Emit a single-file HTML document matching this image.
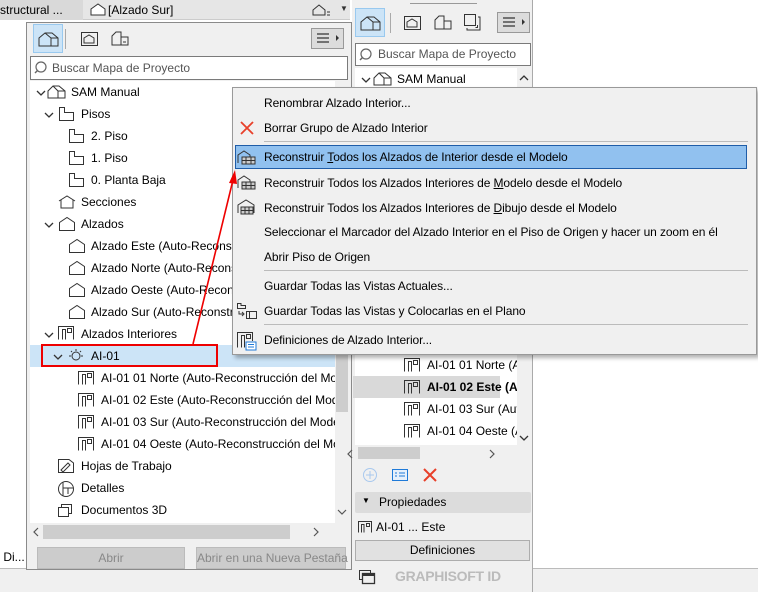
<!DOCTYPE html>
<html><head><meta charset="utf-8"><style>
*{margin:0;padding:0;box-sizing:border-box}
body{width:758px;height:592px;overflow:hidden;background:#fff;font-family:"Liberation Sans",sans-serif;font-size:12px;color:#000;position:relative}
.a{position:absolute;white-space:nowrap}
.t{position:absolute;white-space:nowrap;font-size:12px;line-height:22px;height:22px;overflow:hidden}
svg{position:absolute}
.m{position:absolute;left:264px;white-space:nowrap;font-size:12px;letter-spacing:-0.1px}
.c{position:absolute}
</style></head><body>
<!-- top tab bar -->
<div class="a" style="left:0;top:0;width:758px;height:20px;background:#fff"></div>
<div class="a" style="left:0;top:0;width:350px;height:20px;background:#e6e6e6;border-bottom:1px solid #ccc"></div>
<div class="a" style="left:0;top:0;width:83px;height:20px;background:#d9d9d9;line-height:20px;font-size:12px">structural ...</div>
<div class="a" style="left:108px;top:0;line-height:20px">[Alzado Sur]</div>
<svg style="left:89px;top:2px" width="18" height="15"><path d="M2 7 L9 2 L16 7 V13 H2Z" fill="#fff" stroke="#333"/></svg>
<svg style="left:311px;top:2px" width="22" height="16"><path d="M2 8 L8 3 L14 8 V13 H2Z" fill="none" stroke="#333"/><path d="M16 10h3M16 13h3" stroke="#333"/></svg>
<div class="a" style="left:340px;top:4px;font-size:8px;color:#333">▼</div>
<!-- left area -->
<div class="a" style="left:0;top:20px;width:27px;height:548px;background:#fff"></div>
<div class="a" style="left:0;top:546px;width:27px;height:22px;line-height:22px;font-size:12px">&nbsp;Di...</div>
<div class="a" style="left:0;top:568px;width:758px;height:24px;background:#f0f0f0;border-top:1px solid #bbb"></div>

<!-- left panel -->
<div class="a" style="left:26px;top:22px;width:326px;height:548px;background:#f0f0f0;border:1px solid #8a8a8a"></div>
<div class="a" style="left:33px;top:24px;width:30px;height:29px;background:#cce4f7;border:1px solid #99c9ef"></div>
<svg style="left:37px;top:30px" width="24" height="18"><path d="M2 16V8L8 3H15L21 8V16ZM8 3L14 8V16M14 8H21" fill="none" stroke="#333"/></svg>
<div class="a" style="left:65px;top:29px;width:1px;height:20px;background:#aaa"></div>
<svg style="left:80px;top:30px" width="20" height="18"><rect x="1.5" y="2.5" width="16" height="13" fill="none" stroke="#333"/><path d="M4 13V8L9 5L14 8V13Z" fill="none" stroke="#333"/></svg>
<svg style="left:110px;top:30px" width="20" height="18"><path d="M2 15V6L6 2H11V15ZM11 7H18V15H11" fill="none" stroke="#333"/><path d="M13 12h3" stroke="#333"/></svg>
<div class="a" style="left:311px;top:28px;width:33px;height:21px;background:#dcdcdc;border:1px solid #999"></div>
<svg style="left:316px;top:32px" width="26" height="14"><path d="M1 2H13M1 6H13M1 10H13" stroke="#333" stroke-width="1.2"/><path d="M20 3L23 6L20 9Z" fill="#333"/></svg>
<div class="a" style="left:30px;top:56px;width:318px;height:24px;background:#fff;border:1px solid #7a7a7a"></div>
<svg style="left:34px;top:60px" width="16" height="16"><circle cx="7" cy="7" r="5" fill="none" stroke="#666" stroke-width="1.2"/><path d="M3.5 10.5L1 13" stroke="#666" stroke-width="1.4"/></svg>
<div class="a" style="left:52px;top:58px;line-height:20px;color:#555">Buscar Mapa de Proyecto</div>
<div class="a" style="left:30px;top:81px;width:305px;height:442px;background:#fff"></div>
<div class="a" style="left:335px;top:81px;width:14px;height:442px;background:#f0f0f0"></div>
<div class="a" style="left:336px;top:345px;width:12px;height:67px;background:#cdcdcd"></div>
<svg style="left:337px;top:508px" width="10" height="8"><path d="M1 2L5 6L9 2" fill="none" stroke="#555" stroke-width="1.2"/></svg>
<div class="a" style="left:30px;top:523px;width:305px;height:18px;background:#f0f0f0"></div>
<div class="a" style="left:43px;top:525px;width:247px;height:14px;background:#cdcdcd"></div>
<svg style="left:32px;top:527px" width="8" height="10"><path d="M6 1L2 5L6 9" fill="none" stroke="#555" stroke-width="1.2"/></svg>
<svg style="left:312px;top:527px" width="8" height="10"><path d="M2 1L6 5L2 9" fill="none" stroke="#555" stroke-width="1.2"/></svg>
<div class="a" style="left:37px;top:547px;width:148px;height:22px;background:#cccccc;border:1px solid #bbb;text-align:center;line-height:20px;color:#888">Abrir</div>
<div class="a" style="left:196px;top:547px;width:150px;height:22px;background:#cccccc;border:1px solid #bbb;text-align:center;line-height:20px;color:#888">Abrir en una Nueva Pestaña</div>

<!-- selected row -->
<div class="a" style="left:30px;top:345px;width:305px;height:22px;background:#cce4f7"></div>
<div class="a" style="left:41px;top:344px;width:177px;height:23px;border:2px solid #e00"></div>

<!-- tree -->
<svg class="c" style="left:36px;top:89px" width="10" height="8"><path d="M1 2L5 6L9 2" fill="none" stroke="#333" stroke-width="1.3"/></svg>
<svg style="left:47px;top:84px" width="20" height="16"><path d="M1 14V7L6 2H12L18 7V14ZM6 2L11 7V14M11 7H18" fill="none" stroke="#333"/></svg>
<div class="t" style="left:71px;top:81px">SAM Manual</div>
<svg class="c" style="left:44px;top:111px" width="10" height="8"><path d="M1 2L5 6L9 2" fill="none" stroke="#333" stroke-width="1.3"/></svg>
<svg style="left:58px;top:106px" width="18" height="16"><path d="M1.5 14.5V1.5H6.5V6.5H15.5V14.5Z" fill="none" stroke="#333"/></svg>
<div class="t" style="left:81px;top:103px">Pisos</div>
<svg style="left:68px;top:128px" width="18" height="16"><path d="M1.5 14.5V1.5H6.5V6.5H15.5V14.5Z" fill="none" stroke="#333"/></svg>
<div class="t" style="left:91px;top:125px">2. Piso</div>
<svg style="left:68px;top:150px" width="18" height="16"><path d="M1.5 14.5V1.5H6.5V6.5H15.5V14.5Z" fill="none" stroke="#333"/></svg>
<div class="t" style="left:91px;top:147px">1. Piso</div>
<svg style="left:68px;top:172px" width="18" height="16"><path d="M1.5 14.5V1.5H6.5V6.5H15.5V14.5Z" fill="none" stroke="#333"/></svg>
<div class="t" style="left:91px;top:169px">0. Planta Baja</div>
<svg style="left:58px;top:194px" width="18" height="16"><path d="M1 7L9 2L17 7M3 6V14H15V6" fill="none" stroke="#333"/></svg>
<div class="t" style="left:81px;top:191px">Secciones</div>
<svg class="c" style="left:44px;top:221px" width="10" height="8"><path d="M1 2L5 6L9 2" fill="none" stroke="#333" stroke-width="1.3"/></svg>
<svg style="left:58px;top:216px" width="18" height="16"><path d="M1.5 14.5V6.5L9 1.5L16.5 6.5V14.5Z" fill="none" stroke="#333"/></svg>
<div class="t" style="left:81px;top:213px">Alzados</div>
<svg style="left:68px;top:238px" width="18" height="16"><path d="M1.5 14.5V6.5L9 1.5L16.5 6.5V14.5Z" fill="none" stroke="#333"/></svg>
<div class="t" style="left:91px;top:235px;width:150px">Alzado Este (Auto-Reconstr</div>
<svg style="left:68px;top:260px" width="18" height="16"><path d="M1.5 14.5V6.5L9 1.5L16.5 6.5V14.5Z" fill="none" stroke="#333"/></svg>
<div class="t" style="left:91px;top:257px;width:150px">Alzado Norte (Auto-Reconst</div>
<svg style="left:68px;top:282px" width="18" height="16"><path d="M1.5 14.5V6.5L9 1.5L16.5 6.5V14.5Z" fill="none" stroke="#333"/></svg>
<div class="t" style="left:91px;top:279px;width:150px">Alzado Oeste (Auto-Reconst</div>
<svg style="left:68px;top:304px" width="18" height="16"><path d="M1.5 14.5V6.5L9 1.5L16.5 6.5V14.5Z" fill="none" stroke="#333"/></svg>
<div class="t" style="left:91px;top:301px;width:150px">Alzado Sur (Auto-Reconstr</div>
<svg class="c" style="left:44px;top:331px" width="10" height="8"><path d="M1 2L5 6L9 2" fill="none" stroke="#333" stroke-width="1.3"/></svg>
<svg style="left:57px;top:325px" width="18" height="16"><path d="M1.5 14.5V1.5H16.5V14.5M5.5 14.5V4.5H8.5V14.5" fill="none" stroke="#333"/><rect x="10.5" y="3.5" width="4" height="4" fill="none" stroke="#333"/></svg>
<div class="t" style="left:81px;top:323px">Alzados Interiores</div>
<svg class="c" style="left:53px;top:353px" width="10" height="8"><path d="M1 2L5 6L9 2" fill="none" stroke="#333" stroke-width="1.3"/></svg>
<svg style="left:68px;top:348px" width="16" height="16"><circle cx="8" cy="8" r="4" fill="none" stroke="#333"/><path d="M8 1V3M3 3L4 4M13 3L12 4M1 8H3M13 8H15" stroke="#333"/></svg>
<div class="t" style="left:91px;top:345px">AI-01</div>
<svg style="left:77px;top:370px" width="18" height="16"><path d="M1.5 14.5V1.5H16.5V14.5M5.5 14.5V4.5H8.5V14.5" fill="none" stroke="#333"/><rect x="10.5" y="3.5" width="4" height="4" fill="none" stroke="#333"/></svg>
<div class="t" style="left:101px;top:367px;width:234px">AI-01 01 Norte (Auto-Reconstrucción del Modelo)</div>
<svg style="left:77px;top:392px" width="18" height="16"><path d="M1.5 14.5V1.5H16.5V14.5M5.5 14.5V4.5H8.5V14.5" fill="none" stroke="#333"/><rect x="10.5" y="3.5" width="4" height="4" fill="none" stroke="#333"/></svg>
<div class="t" style="left:101px;top:389px;width:234px">AI-01 02 Este (Auto-Reconstrucción del Modelo)</div>
<svg style="left:77px;top:414px" width="18" height="16"><path d="M1.5 14.5V1.5H16.5V14.5M5.5 14.5V4.5H8.5V14.5" fill="none" stroke="#333"/><rect x="10.5" y="3.5" width="4" height="4" fill="none" stroke="#333"/></svg>
<div class="t" style="left:101px;top:411px;width:234px">AI-01 03 Sur (Auto-Reconstrucción del Modelo)</div>
<svg style="left:77px;top:436px" width="18" height="16"><path d="M1.5 14.5V1.5H16.5V14.5M5.5 14.5V4.5H8.5V14.5" fill="none" stroke="#333"/><rect x="10.5" y="3.5" width="4" height="4" fill="none" stroke="#333"/></svg>
<div class="t" style="left:101px;top:433px;width:234px">AI-01 04 Oeste (Auto-Reconstrucción del Modelo)</div>
<svg style="left:57px;top:458px" width="18" height="16"><path d="M1.5 14.5V1.5H12L16.5 5V14.5Z" fill="none" stroke="#333"/><path d="M4 12L11 5L13 7L6 14Z" fill="none" stroke="#333"/></svg>
<div class="t" style="left:81px;top:455px">Hojas de Trabajo</div>
<svg style="left:57px;top:480px" width="18" height="18"><circle cx="9" cy="9" r="7.5" fill="none" stroke="#333"/><path d="M6 2V16M6 8H16M11 8V14" fill="none" stroke="#333"/></svg>
<div class="t" style="left:81px;top:477px">Detalles</div>
<svg style="left:57px;top:502px" width="18" height="16"><rect x="1.5" y="5.5" width="10" height="9" fill="none" stroke="#333"/><path d="M4.5 5.5V2.5H14.5V11.5H11.5" fill="none" stroke="#333"/></svg>
<div class="t" style="left:81px;top:499px">Documentos 3D</div>

<!-- right panel -->
<div class="a" style="left:352px;top:0;width:181px;height:592px;background:#f0f0f0;border-right:1px solid #aaa"></div>
<div class="a" style="left:410px;top:3px;width:67px;height:1px;background:#999"></div>
<div class="a" style="left:355px;top:8px;width:30px;height:29px;background:#cce4f7;border:1px solid #99c9ef"></div>
<svg style="left:359px;top:14px" width="24" height="18"><path d="M2 16V8L8 3H15L21 8V16ZM8 3L14 8V16M14 8H21" fill="none" stroke="#333"/></svg>
<div class="a" style="left:390px;top:13px;width:1px;height:20px;background:#aaa"></div>
<svg style="left:403px;top:14px" width="20" height="18"><rect x="1.5" y="2.5" width="16" height="13" fill="none" stroke="#333"/><path d="M4 13V8L9 5L14 8V13Z" fill="none" stroke="#333"/></svg>
<svg style="left:433px;top:14px" width="20" height="18"><path d="M2 15V6L6 2H11V15ZM11 7H18V15H11" fill="none" stroke="#333"/></svg>
<svg style="left:463px;top:13px" width="20" height="20"><rect x="1.5" y="1.5" width="11" height="11" fill="none" stroke="#333"/><path d="M4 15V17H17V4H15M12.5 14.5H14.5V12" fill="none" stroke="#333"/></svg>
<div class="a" style="left:497px;top:12px;width:33px;height:21px;background:#dcdcdc;border:1px solid #999"></div>
<svg style="left:502px;top:16px" width="26" height="14"><path d="M1 2H13M1 6H13M1 10H13" stroke="#333" stroke-width="1.2"/><path d="M20 3L23 6L20 9Z" fill="#333"/></svg>
<div class="a" style="left:355px;top:43px;width:176px;height:23px;background:#fff;border:1px solid #7a7a7a"></div>
<svg style="left:359px;top:47px" width="16" height="16"><circle cx="7" cy="7" r="5" fill="none" stroke="#666" stroke-width="1.2"/><path d="M3.5 10.5L1 13" stroke="#666" stroke-width="1.4"/></svg>
<div class="a" style="left:378px;top:44px;line-height:20px;color:#555">Buscar Mapa de Proyecto</div>
<div class="a" style="left:355px;top:68px;width:162px;height:377px;background:#fff"></div>
<svg class="c" style="left:361px;top:76px" width="10" height="8"><path d="M1 2L5 6L9 2" fill="none" stroke="#333" stroke-width="1.3"/></svg>
<svg style="left:373px;top:71px" width="20" height="16"><path d="M1 14V7L6 2H12L18 7V14ZM6 2L11 7V14M11 7H18" fill="none" stroke="#333"/></svg>
<div class="t" style="left:397px;top:68px">SAM Manual</div>
<svg style="left:519px;top:74px" width="10" height="8"><path d="M1 6L5 2L9 6" fill="none" stroke="#333" stroke-width="1.3"/></svg>
<svg style="left:519px;top:434px" width="10" height="8"><path d="M1 2L5 6L9 2" fill="none" stroke="#333" stroke-width="1.3"/></svg>
<div class="a" style="left:353px;top:376px;width:147px;height:22px;background:#d9d9d9"></div>
<svg style="left:403px;top:357px" width="18" height="16"><path d="M1.5 14.5V1.5H16.5V14.5M5.5 14.5V4.5H8.5V14.5" fill="none" stroke="#333"/><rect x="10.5" y="3.5" width="4" height="4" fill="none" stroke="#333"/></svg>
<div class="t" style="left:427px;top:354px;width:90px">AI-01 01 Norte (Au</div>
<svg style="left:403px;top:379px" width="18" height="16"><path d="M1.5 14.5V1.5H16.5V14.5M5.5 14.5V4.5H8.5V14.5" fill="none" stroke="#333"/><rect x="10.5" y="3.5" width="4" height="4" fill="none" stroke="#333"/></svg>
<div class="t" style="left:427px;top:376px;font-weight:bold;width:90px">AI-01 02 Este (Au</div>
<svg style="left:403px;top:401px" width="18" height="16"><path d="M1.5 14.5V1.5H16.5V14.5M5.5 14.5V4.5H8.5V14.5" fill="none" stroke="#333"/><rect x="10.5" y="3.5" width="4" height="4" fill="none" stroke="#333"/></svg>
<div class="t" style="left:427px;top:398px;width:90px">AI-01 03 Sur (Auto</div>
<svg style="left:403px;top:423px" width="18" height="16"><path d="M1.5 14.5V1.5H16.5V14.5M5.5 14.5V4.5H8.5V14.5" fill="none" stroke="#333"/><rect x="10.5" y="3.5" width="4" height="4" fill="none" stroke="#333"/></svg>
<div class="t" style="left:427px;top:420px;width:90px">AI-01 04 Oeste (Au</div>
<div class="a" style="left:358px;top:447px;width:62px;height:12px;background:#cdcdcd"></div>
<svg style="left:346px;top:449px" width="8" height="10"><path d="M6 1L2 5L6 9" fill="none" stroke="#555" stroke-width="1.2"/></svg>
<svg style="left:488px;top:449px" width="8" height="10"><path d="M2 1L6 5L2 9" fill="none" stroke="#555" stroke-width="1.2"/></svg>
<svg style="left:362px;top:467px" width="16" height="16"><circle cx="8" cy="8" r="6.5" fill="none" stroke="#a8c8ee"/><path d="M8 4V12M4 8H12" stroke="#a8c8ee"/></svg>
<svg style="left:391px;top:467px" width="18" height="16"><rect x="1.5" y="2.5" width="15" height="11" fill="#e6f0fb" stroke="#1f7ad8"/><path d="M4 6H6M8 6H14M4 9H6M8 9H14" stroke="#1f7ad8"/></svg>
<svg style="left:422px;top:467px" width="16" height="16"><path d="M2 2L14 14M14 2L2 14" stroke="#e8402a" stroke-width="2"/></svg>
<div class="a" style="left:355px;top:492px;width:176px;height:21px;background:#dcdcdc;border-radius:2px"></div>
<div class="a" style="left:362px;top:496px;font-size:8px">▼</div>
<div class="a" style="left:379px;top:492px;line-height:21px">Propiedades</div>
<svg style="left:357px;top:520px" width="16" height="14"><path d="M1.5 12.5V1.5H14.5V12.5M4.5 12.5V4.5H7V12.5" fill="none" stroke="#333"/><rect x="9.5" y="3.5" width="3" height="3" fill="none" stroke="#333"/></svg>
<div class="a" style="left:376px;top:518px;line-height:18px">AI-01 ... Este</div>
<div class="a" style="left:355px;top:540px;width:175px;height:21px;background:#e1e1e1;border:1px solid #adadad;text-align:center;line-height:19px">Definiciones</div>
<svg style="left:358px;top:569px" width="18" height="16"><rect x="1.5" y="1.5" width="11" height="9" fill="none" stroke="#333"/><rect x="4.5" y="4.5" width="12" height="10" fill="#f0f0f0" stroke="#333" stroke-width="1.3"/><path d="M4.5 6H16.5" stroke="#333" stroke-width="2"/></svg>
<div class="a" style="left:395px;top:567px;line-height:18px;font-size:14px;font-weight:bold;color:#bbb;letter-spacing:-0.3px">GRAPHISOFT ID</div>

<!-- context menu -->
<div class="a" style="left:232px;top:87px;width:525px;height:268px;background:#f0f0f0;border:1px solid #999;box-shadow:3px 3px 4px rgba(0,0,0,0.3)"></div>
<div class="m" style="top:96px">Renombrar Alzado Interior...</div>
<svg style="left:240px;top:121px" width="14" height="14"><path d="M1 1L13 13M13 1L1 13" stroke="#e8402a" stroke-width="1.8"/></svg>
<div class="m" style="top:121px">Borrar Grupo de Alzado Interior</div>
<div class="a" style="left:264px;top:141px;width:484px;height:1px;background:#bbb"></div>
<div class="a" style="left:235px;top:145px;width:512px;height:24px;background:#91c1ef;border:1px solid #1f5da8"></div>
<svg style="left:236px;top:149px" width="22" height="17"><path d="M2 14V6L8 2L14 6V14" fill="none" stroke="#333"/><rect x="6" y="8" width="13" height="7" fill="#ccc" stroke="#333"/><path d="M6 11.5H19M10 8V15M15 8V15" stroke="#333"/></svg>
<div class="m" style="top:150px">Reconstruir <u>T</u>odos los Alzados de Interior desde el Modelo</div>
<svg style="left:236px;top:174px" width="22" height="17"><path d="M2 14V6L8 2L14 6V14" fill="none" stroke="#333"/><rect x="6" y="8" width="13" height="7" fill="#ccc" stroke="#333"/><path d="M6 11.5H19M10 8V15M15 8V15" stroke="#333"/></svg>
<div class="m" style="top:176px">Reconstruir Todos los Alzados Interiores de <u>M</u>odelo desde el Modelo</div>
<svg style="left:236px;top:199px" width="22" height="17"><path d="M2 14V6L10 1L18 6V14" fill="none" stroke="#333"/><rect x="5" y="8" width="12" height="7" fill="#ccc" stroke="#333"/><path d="M5 11.5H17M9 8V15M13 8V15" stroke="#333"/></svg>
<div class="m" style="top:201px">Reconstruir Todos los Alzados Interiores de <u>D</u>ibujo desde el Modelo</div>
<div class="m" style="top:225px">Seleccionar el Marcador del Alzado Interior en el Piso de Origen y hacer un zoom en él</div>
<div class="m" style="top:250px">Abrir Piso de Origen</div>
<div class="a" style="left:264px;top:270px;width:484px;height:1px;background:#bbb"></div>
<div class="m" style="top:279px">Guardar Todas las Vistas Actuales...</div>
<svg style="left:236px;top:302px" width="22" height="18"><path d="M1.5 6.5V1.5H5V3.5H9.5V6.5Z" fill="none" stroke="#333"/><path d="M3 9V12H7M6 10L8 12L6 14" fill="none" stroke="#333"/><rect x="10.5" y="9.5" width="10" height="7" fill="none" stroke="#333"/><path d="M13.5 9.5V16.5" stroke="#333"/></svg>
<div class="m" style="top:304px">Guardar Todas las Vistas y Colocarlas en el Plano</div>
<div class="a" style="left:264px;top:324px;width:484px;height:1px;background:#bbb"></div>
<svg style="left:236px;top:331px" width="22" height="20"><path d="M1.5 16.5V1.5H16.5V10M5.5 16.5V4.5H8.5V16.5" fill="none" stroke="#333"/><rect x="10.5" y="3.5" width="4" height="4" fill="none" stroke="#333"/><rect x="10" y="11" width="10" height="8" fill="#fff" stroke="#1f7ad8"/><path d="M12 13.5H18M12 16H18" stroke="#1f7ad8"/></svg>
<div class="m" style="top:333px">Definiciones de Alzado Interior...</div>

<!-- red arrow -->
<svg style="left:0;top:0" width="758" height="592"><path d="M193 344 L233 180" stroke="#e00" stroke-width="1.6"/><path d="M235 170 L229 183 L237 184Z" fill="#e00"/></svg>
</body></html>
